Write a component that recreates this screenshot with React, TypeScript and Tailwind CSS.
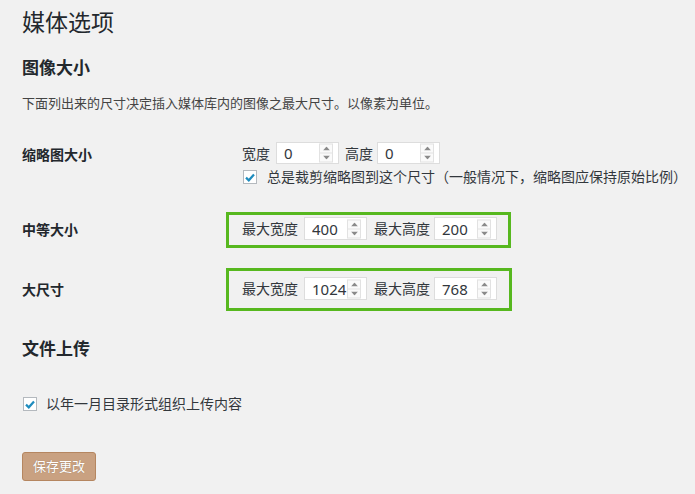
import { useState } from 'react';

const font = { fontFamily: '"Noto Sans", "Noto Sans CJK SC", sans-serif' };

function Spinner() {
  return (
    <div className="absolute right-[5px] top-1/2 flex h-[19px] w-[14px] -translate-y-1/2 flex-col border border-[#e2e2e2] bg-[#fafafa]">
      <div className="flex flex-1 items-center justify-center border-b border-[#e2e2e2]">
        <svg width="7" height="4" viewBox="0 0 7 4"><path d="M0 4 L3.5 0 L7 4 Z" fill="#8a8a8a" /></svg>
      </div>
      <div className="flex flex-1 items-center justify-center">
        <svg width="7" height="4" viewBox="0 0 7 4"><path d="M0 0 L3.5 4 L7 0 Z" fill="#8a8a8a" /></svg>
      </div>
    </div>
  );
}

function NumberField({ value, h = 'h-[22px]' }: { value: string; h?: string }) {
  const [v, setV] = useState(value);
  return (
    <div className={`relative w-[63px] ${h} border border-[#dddddd] bg-white`}>
      <input
        value={v}
        onChange={(e) => setV(e.target.value)}
        className="h-full w-full bg-transparent pl-[7px] text-[15px] leading-none text-[#32373c] outline-none"
        style={font}
      />
      <Spinner />
    </div>
  );
}

function Check({ checked }: { checked: boolean }) {
  return (
    <span className="flex h-[14px] w-[14px] shrink-0 items-center justify-center border border-[#b4b9be] bg-white">
      {checked ? (
        <svg width="10" height="9" viewBox="0 0 10 9">
          <path d="M1 4.6 L3.8 7.3 L9 1.5" fill="none" stroke="#1e8cbe" strokeWidth="2.2" />
        </svg>
      ) : null}
    </span>
  );
}

function SizePair({ a, b, va, vb, h }: { a: string; b: string; va: string; vb: string; h?: string }) {
  return (
    <div className="flex items-center text-[14px] text-[#32373c]">
      <span>{a}</span>
      <span className="ml-[6px]"><NumberField value={va} h={h} /></span>
      <span className="ml-[7px]">{b}</span>
      <span className="ml-[4px]"><NumberField value={vb} h={h} /></span>
    </div>
  );
}

export default function App() {
  return (
    <div className="min-h-[494px] w-full bg-[#f1f1f1] pl-[22px] pt-[8px] text-[#444]" style={font}>
      <h1 className="text-[23px] leading-[29px] text-[#23282d]">媒体选项</h1>

      <h2 className="mt-[20px] text-[17px] font-bold leading-[22px] text-[#23282d]">图像大小</h2>
      <p className="mt-[14px] text-[13px] leading-[20px] text-[#444]">
        下面列出来的尺寸决定插入媒体库内的图像之最大尺寸。以像素为单位。
      </p>

      <div className="mt-[29px] flex">
        <div className="w-[204px] pt-[3px] text-[14px] font-bold leading-[20px] text-[#23282d]">缩略图大小</div>
        <div className="pl-[16px]">
          <div className="flex items-center text-[14px] text-[#32373c]">
            <span>宽度</span>
            <span className="ml-[6px]"><NumberField value="0" /></span>
            <span className="ml-[6px]">高度</span>
            <span className="ml-[4px]"><NumberField value="0" /></span>
          </div>
          <label className="mt-[3px] flex items-center text-[14px] leading-[20px] text-[#32373c]">
            <span className="ml-[1px]"><Check checked /></span>
            <span className="ml-[10px]">总是裁剪缩略图到这个尺寸（一般情况下，缩略图应保持原始比例）</span>
          </label>
        </div>
      </div>

      <div className="mt-[25px] flex items-center">
        <div className="w-[204px] text-[14px] font-bold leading-[20px] text-[#23282d]">中等大小</div>
        <div className="w-[285px] border-[3px] border-[#57b81f] pb-[5px] pl-[13px] pt-[2px]">
          <SizePair a="最大宽度" b="最大高度" va="400" vb="200" h="h-[23px]" />
        </div>
      </div>

      <div className="mt-[20px] flex items-center">
        <div className="w-[204px] text-[14px] font-bold leading-[20px] text-[#23282d]">大尺寸</div>
        <div className="w-[286px] border-[3px] border-[#57b81f] pb-[8px] pl-[13px] pt-[6px]">
          <SizePair a="最大宽度" b="最大高度" va="1024" vb="768" h="h-[23px]" />
        </div>
      </div>

      <h2 className="mt-[27px] text-[17px] font-bold leading-[22px] text-[#23282d]">文件上传</h2>

      <label className="mt-[34px] flex items-center text-[14px] leading-[20px] text-[#32373c]">
        <span className="ml-[1px]"><Check checked /></span>
        <span className="ml-[9px]">以年一月目录形式组织上传内容</span>
      </label>

      <button
        type="button"
        className="mt-[38px] h-[29px] rounded-[3px] border border-[#b58660] bg-[#c9a181] px-[10px] text-[13px] text-white [text-shadow:0_0_1px_rgba(0,0,0,0.3)]"
        style={font}
      >
        保存更改
      </button>
    </div>
  );
}
